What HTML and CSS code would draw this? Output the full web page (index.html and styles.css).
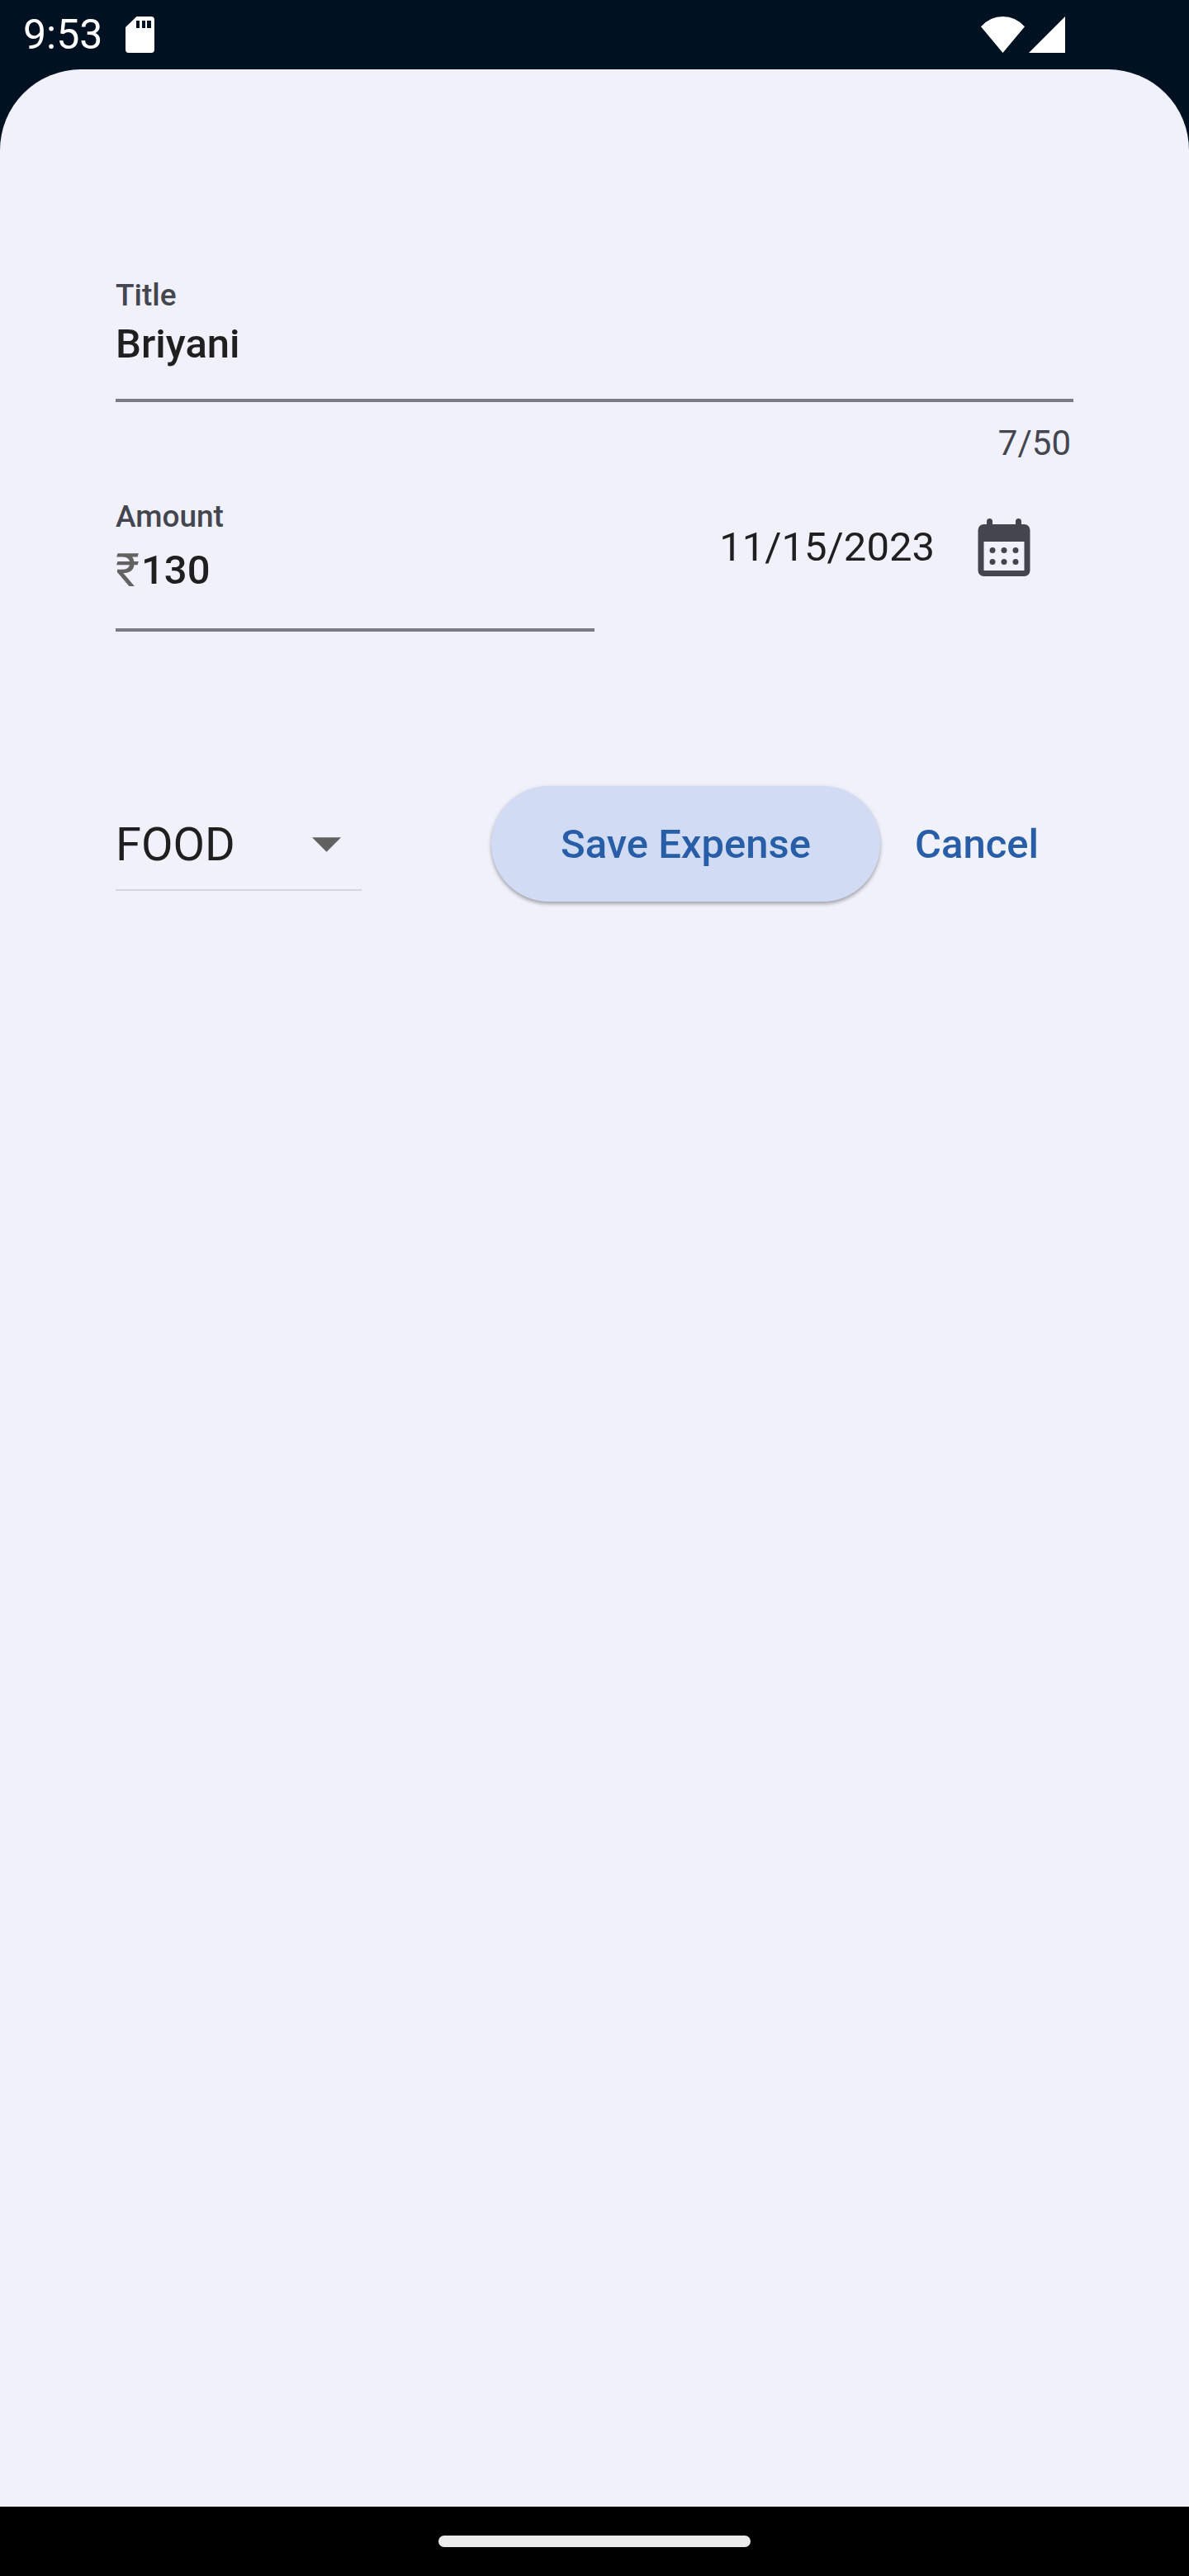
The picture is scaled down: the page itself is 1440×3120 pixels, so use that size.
FILE: index.html
```html
<!DOCTYPE html>
<html lang="en">
<head>
  <meta charset="utf-8">
  <meta name="viewport" content="width=device-width, initial-scale=1">
  <title>New Expense</title>
  <link rel="stylesheet" href="styles.css">
</head>
<body>
  <header class="status-bar">
    <div class="status-group status-left">
      <time class="clock">9:53</time>
      <svg class="sd-icon" viewBox="0 0 35 44" aria-hidden="true">
        <path fill="currentColor" fill-rule="evenodd" d="M13.5 0H31a4 4 0 0 1 4 4v36a4 4 0 0 1-4 4H4a4 4 0 0 1-4-4V13zM13 5v9h4V5zM20 5v9h4V5zM26 5v9h5V5z"/>
      </svg>
    </div>
    <div class="status-group">
      <svg class="wifi-icon" viewBox="0 0 53 44" aria-hidden="true">
        <path fill="currentColor" d="M0 12.3Q11 0 26.500 0T53 12.300L26.500 44z"/>
      </svg>
      <svg class="signal-icon" viewBox="0 0 44 44" aria-hidden="true">
        <path fill="currentColor" d="M0 44L44 0v44z"/>
      </svg>
    </div>
  </header>

  <main class="sheet">
    <form class="expense-form">
      <div class="field">
        <label class="field-label" for="title">Title</label>
        <div class="field-control">
          <input class="field-input" id="title" type="text" maxlength="50" value="Briyani">
        </div>
      </div>
      <p class="counter">7/50</p>

      <div class="form-row">
        <div class="field amount-field">
          <label class="field-label" for="amount">Amount</label>
          <div class="field-control">
            <span class="prefix">₹</span>
            <input class="field-input" id="amount" type="text" inputmode="numeric" value="130">
          </div>
        </div>
        <div class="date-picker">
          <span class="date">11/15/2023</span>
          <button class="icon-button" type="button" aria-label="Pick a date">
            <svg class="calendar-icon" viewBox="0 0 24 24" aria-hidden="true">
              <path fill="currentColor" fill-rule="evenodd" d="M7 2a1 1 0 0 1 1 1v1h8V3a1 1 0 0 1 2 0v1h1a2 2 0 0 1 2 2v14a2 2 0 0 1-2 2H5a2 2 0 0 1-2-2V6a2 2 0 0 1 2-2h1V3a1 1 0 0 1 1-1zM5 10v10h14V10z"/>
              <g fill="currentColor">
                <circle cx="8" cy="13" r="1"/><circle cx="12" cy="13" r="1"/><circle cx="16" cy="13" r="1"/>
                <circle cx="8" cy="17" r="1"/><circle cx="12" cy="17" r="1"/><circle cx="16" cy="17" r="1"/>
              </g>
            </svg>
          </button>
        </div>
      </div>

      <div class="actions">
        <div class="dropdown">
          <select class="dropdown-select" aria-label="Category">
            <option selected>FOOD</option>
          </select>
          <svg class="dropdown-arrow" viewBox="0 0 10 5" aria-hidden="true"><path fill="currentColor" d="M0 0h10L5 5z"/></svg>
        </div>
        <div class="buttons">
          <button class="button button-elevated" type="submit">Save Expense</button>
          <button class="button button-text" type="button">Cancel</button>
        </div>
      </div>
    </form>
  </main>

  <footer class="nav-bar"><div class="nav-handle"></div></footer>
</body>
</html>
```
FILE: styles.css
```css
* {
  box-sizing: border-box;
}

body {
  margin: 0;
  min-height: 100vh;
  display: flex;
  flex-direction: column;
  background: #001122;
  color: #1f1f1f;
  font-family: Roboto, "Liberation Sans", sans-serif;
}

input,
select,
button {
  margin: 0;
  padding: 0;
  border: 0;
  background: none;
  color: inherit;
  font: inherit;
}

svg {
  display: block;
  flex: none;
}

.status-bar {
  height: 84px;
  padding: 0 150px 0 28px;
  display: flex;
  align-items: center;
  justify-content: space-between;
  color: #fff;
}

.status-group {
  display: flex;
  align-items: center;
  gap: 5px;
}

.status-left {
  gap: 28px;
}

.clock {
  font-size: 50px;
  line-height: 64px;
}

.sd-icon {
  width: 35px;
  height: 44px;
}

.wifi-icon {
  width: 53px;
  height: 44px;
}

.signal-icon {
  width: 44px;
  height: 44px;
}

.sheet {
  flex: 1;
  padding: 252px 140px 0;
  border-radius: 98px 98px 0 0;
  background: #f1f1fb;
}

.field {
  border-bottom: 4px solid #7b7b85;
  padding-bottom: 36px;
}

.field-label {
  display: block;
  font-size: 37px;
  font-weight: 500;
  line-height: 44px;
  color: #44464f;
}

.field-control {
  display: flex;
  align-items: center;
  margin-top: 7px;
}

.field-input {
  flex: 1;
  min-width: 0;
  height: 60px;
  font-size: 49px;
  font-weight: 500;
  line-height: 60px;
  outline: none;
}

.counter {
  margin: 26px 0 0;
  padding-right: 3px;
  font-size: 42px;
  line-height: 48px;
  text-align: right;
  color: #44464f;
}

.form-row {
  display: flex;
  align-items: flex-start;
  margin-top: 18px;
}

.amount-field {
  flex: 1;
  min-width: 0;
  margin-top: 25px;
  padding-bottom: 40px;
}

.amount-field .field-control {
  gap: 2px;
  margin-top: 13px;
}

.prefix {
  font-size: 56px;
  line-height: 60px;
  color: #626262;
}

.date-picker {
  flex: 1;
  display: flex;
  align-items: center;
  justify-content: flex-end;
}

.date {
  font-size: 49px;
  line-height: 60px;
}

.icon-button {
  padding: 42px;
  color: #44464f;
}

.calendar-icon {
  width: 84px;
  height: 84px;
}

.actions {
  display: flex;
  align-items: center;
  justify-content: space-between;
  margin-top: 187px;
}

.dropdown {
  display: grid;
  align-items: center;
  width: 298px;
  padding-top: 4px;
  border-bottom: 2px solid #d5d5da;
}

.dropdown-select {
  grid-area: 1 / 1;
  width: 100%;
  height: 108px;
  appearance: none;
  font-size: 56px;
  outline: none;
}

.dropdown-arrow {
  grid-area: 1 / 1;
  justify-self: end;
  width: 35px;
  height: 18px;
  margin-right: 25px;
  color: #616161;
  pointer-events: none;
}

.buttons {
  display: flex;
}

.button {
  height: 140px;
  border-radius: 70px;
  font-size: 49px;
  font-weight: 500;
  color: #285ea7;
}

.button-elevated {
  padding: 0 84px;
  background: #d1dcf4;
  box-shadow: 0 3px 4px rgba(0, 0, 0, 0.28), 0 1px 6px rgba(0, 0, 0, 0.08);
}

.button-text {
  padding: 0 42px;
}

.nav-bar {
  height: 84px;
  display: flex;
  align-items: center;
  justify-content: center;
  background: #000;
}

.nav-handle {
  width: 378px;
  height: 14px;
  border-radius: 7px;
  background: #ebebeb;
}
```
